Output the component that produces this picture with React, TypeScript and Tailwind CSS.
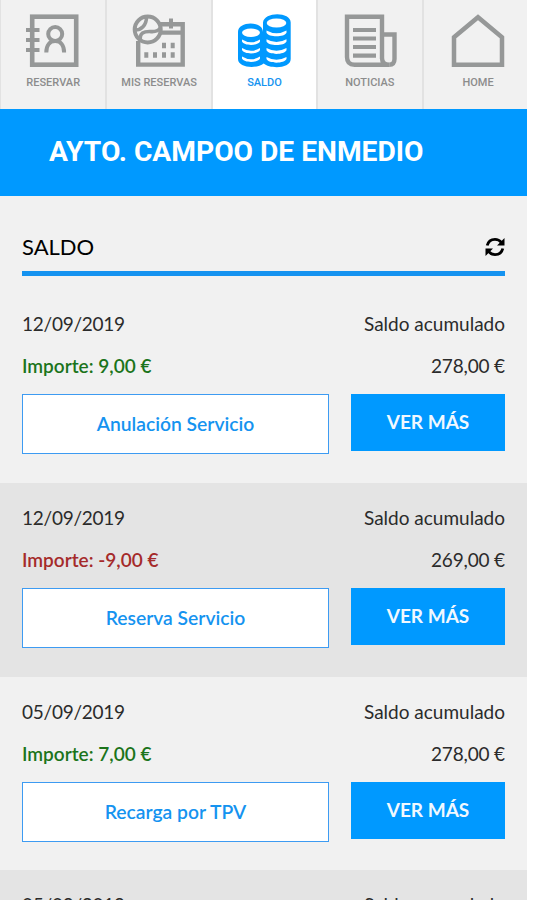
import React from "react";
import clsx from "clsx";

type Movement = {
  date: string;
  amount?: string;
  negative?: boolean;
  concept?: string;
  balance?: string;
};

const movements: Movement[] = [
  { date: "12/09/2019", amount: "9,00 €", concept: "Anulación Servicio", balance: "278,00 €" },
  { date: "12/09/2019", amount: "-9,00 €", negative: true, concept: "Reserva Servicio", balance: "269,00 €" },
  { date: "05/09/2019", amount: "7,00 €", concept: "Recarga por TPV", balance: "278,00 €" },
  { date: "05/09/2019" },
];

const ContactsIcon = () => (
  <svg width="54" height="54" viewBox="0 0 54 54" fill="none" stroke="currentColor">
    <rect x="6.2" y="2.7" width="44" height="48" strokeWidth="4.6" />
    <path d="M0 16h13.5M0 26h13.5M0 36h13.5" strokeWidth="4" />
    <circle cx="29.2" cy="20" r="7" strokeWidth="4" />
    <path d="M20.3 38.5C20.3 31 24 27 29.2 27s8.9 4 8.9 11.5" strokeWidth="4" />
  </svg>
);

const BookingsIcon = () => (
  <svg width="54" height="54" viewBox="0 0 54 54" fill="none" stroke="currentColor">
    <path d="M6.2 27v23.6h44.5V10.2H27M28 18.6h22.7" strokeWidth="4.4" />
    <path d="M39 4.5v10" strokeWidth="4" />
    <path d="M12.3 41h4M21 41h4M30 41h4M38.7 41h4M30 31.5h4M38.7 31.5h4" strokeWidth="5.5" />
    <circle cx="15.7" cy="15.5" r="13" strokeWidth="4" />
    <path d="M3 16C9 16 14.5 11.500 14.5 3M8.500 27C7 18.500 12 17.300 19 17.600c4 .2 7.500-.8 9-3.600" strokeWidth="3.6" />
  </svg>
);

const CoinsIcon = () => (
  <svg width="54" height="54" viewBox="0 0 54 54">
    <path
      d="M1 18C1 6.5 26 6.5 26 18V8.500C27 -2.500 53.700 -2.500 53.700 8.500V45c0 10-21 10-27 4.500C20 55 1 54 1 45Z"
      fill="currentColor"
    />
    <g fill="#fff">
      <ellipse cx="14" cy="18.700" rx="9" ry="4.200" />
      <ellipse cx="39.500" cy="9" rx="9.800" ry="4.500" />
      <path d="M5 25.500q9 5.500 18 0v2c-2 4.500-16 4.500-18 0Z" />
      <path d="M5 34q9 5.500 18 0v2c-2 4.500-16 4.500-18 0Z" />
      <path d="M5 42.500q9 5.500 18 0v2c-2 4.500-16 4.500-18 0Z" />
      <path d="M29.500 16.500q10 5.500 20 0v2.200c-2 4.800-18 4.800-20 0Z" />
      <path d="M29.500 25.300q10 5.500 20 0v2.200c-2 4.800-18 4.800-20 0Z" />
      <path d="M29.500 34.100q10 5.500 20 0v2.200c-2 4.800-18 4.800-20 0Z" />
      <path d="M29.500 42.900q10 5.500 20 0v2.200c-2 4.800-18 4.800-20 0Z" />
    </g>
  </svg>
);

const NewsIcon = () => (
  <svg width="54" height="54" viewBox="0 0 54 54" fill="none" stroke="currentColor">
    <path d="M39 45V2.700H4V43q0 7.700 7.500 7.700h34.700Q39 50.700 39 44" strokeWidth="4.400" />
    <path d="M39 20.500h12.500V45q0 5.700-5.300 5.700" strokeWidth="4.400" />
    <path d="M10 16h23M10 24.500h23M10 33h23M10 41.600h23" strokeWidth="4.200" />
  </svg>
);

const HomeIcon = () => (
  <svg width="54" height="54" viewBox="0 0 54 54" fill="none" stroke="currentColor">
    <path d="M3 23.200 27 3.200l24 20v27.500H3Z" strokeWidth="4.500" />
  </svg>
);

const tabs = [
  { label: "RESERVAR", icon: ContactsIcon },
  { label: "MIS RESERVAS", icon: BookingsIcon },
  { label: "SALDO", icon: CoinsIcon, active: true },
  { label: "NOTICIAS", icon: NewsIcon },
  { label: "HOME", icon: HomeIcon },
];

const TabBar = () => (
  <nav className="flex h-[109px] w-[533px] shrink-0">
    {tabs.map(({ label, icon: Icon, active }) => (
      <div
        key={label}
        className={clsx(
          "flex w-[105.4px] shrink-0 flex-col items-center border-l-2 border-[#e2e2e2] pt-3.5 first:border-l last:w-[111px]",
          active ? "bg-white text-[#0099ff]" : "bg-[#f1f1f1] text-[#969898]"
        )}
      >
        <Icon />
        <span
          className={clsx(
            "mt-[7px] font-['Roboto'] text-[11px] leading-4 font-medium whitespace-nowrap",
            active ? "text-[#1593f0]" : "text-[#8c8c8c]"
          )}
        >
          {label}
        </span>
      </div>
    ))}
  </nav>
);

const RefreshIcon = () => (
  <svg width="20" height="20" viewBox="0 0 20 20" fill="none" stroke="currentColor" strokeWidth="2.800">
    <path d="M2.200 8.500C3.200 4.500 6.200 2.300 10 2.300c2.600 0 4.700 1 6.300 3M17.800 11.500c-1 4-4 6.200-7.800 6.200-2.600 0-4.700-1-6.300-3" />
    <path d="M19.500 1v7.500H12ZM.5 19v-7.500H8Z" fill="currentColor" stroke="none" />
  </svg>
);

const MovementRow = ({ movement }: { movement: Movement }) => (
  <li className="h-[193.800px] px-[22px] pt-[21px] even:bg-[#e4e4e4]">
    <div className="flex justify-between leading-7">
      <span className="tracking-[-0.25px]">{movement.date}</span>
      <span>Saldo acumulado</span>
    </div>
    {movement.amount && (
      <div className="mt-3.5 flex justify-between leading-7">
        <span className={clsx("font-semibold", movement.negative ? "text-[#a52a2a]" : "text-[#1b741b]")}>
          Importe: {movement.amount}
        </span>
        <span className="tracking-[-0.15px]">{movement.balance}</span>
      </div>
    )}
    {movement.concept && (
      <div className="mt-3.5 flex items-start justify-between">
        <button className="h-[60px] w-[307px] border border-[#3d9bf2] bg-white pt-px text-[19.300px] font-semibold text-[#1593f0]">
          {movement.concept}
        </button>
        <button className="h-[57px] w-[154px] bg-[#0099ff] font-bold text-[#f1f8ff]">VER MÁS</button>
      </div>
    )}
  </li>
);

export default function App() {
  return (
    <div className="h-[900px] overflow-hidden bg-white">
      <div className="h-full w-[527px] overflow-hidden bg-[#f1f1f1] font-['Lato',sans-serif] text-[19px] text-[#2b2b2b]">
        <TabBar />
        <header className="h-[87px] bg-[#0099ff] pl-[49px]">
          <h1 className="font-['Roboto'] text-[28.200px] leading-[86px] font-bold text-white">
            AYTO. CAMPOO DE ENMEDIO
          </h1>
        </header>
        <div className="mx-[22px] flex h-20 items-center justify-between border-b-[5px] border-[#1593f0] pt-[26px] text-black">
          <h2 className="text-[22px]">SALDO</h2>
          <RefreshIcon />
        </div>
        <ul className="mt-[13px]">
          {movements.map((movement, idx) => (
            <MovementRow key={idx} movement={movement} />
          ))}
        </ul>
      </div>
    </div>
  );
}
